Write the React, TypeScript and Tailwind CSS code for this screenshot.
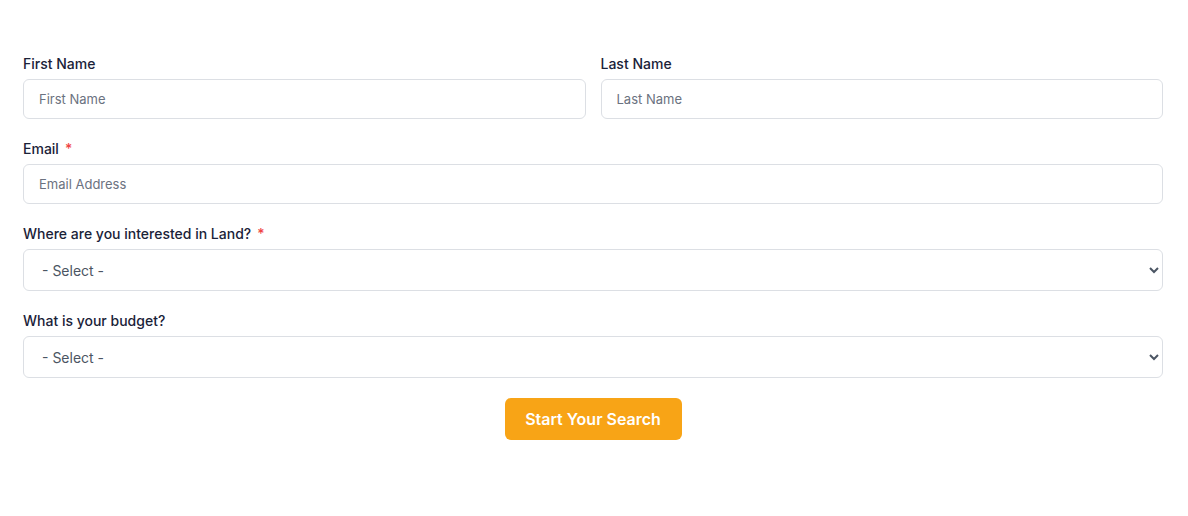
import React from 'react';

const Label: React.FC<{ text: string; required?: boolean }> = ({ text, required }) => (
  <label className="block text-sm leading-5 font-medium text-[#1a2238]">
    {text}
    {required && <span className="ml-1.5 text-[#ef4444]">*</span>}
  </label>
);

const inputCls =
  'mt-[5px] block w-full h-10 rounded-md border border-[#dcdfe4] bg-white px-[15px] text-[13px] text-[#374151] placeholder-[#6b7280] focus:outline-none';

const selectCls =
  'mt-[5px] block w-full h-[42px] rounded-md border border-[#dcdfe4] bg-white pl-[14px] pr-2 text-sm text-[#4b5563] focus:outline-none';

export default function App() {
  return (
    <div className="min-h-screen bg-white font-['Inter',sans-serif]">
      <form className="ml-[23px] w-[1140px] pt-[54px] flex flex-col gap-5" onSubmit={(e) => e.preventDefault()}>
        <div className="grid grid-cols-2 gap-[15px]">
          <div>
            <Label text="First Name" />
            <input className={inputCls} placeholder="First Name" />
          </div>
          <div>
            <Label text="Last Name" />
            <input className={inputCls} placeholder="Last Name" />
          </div>
        </div>
        <div>
          <Label text="Email" required />
          <input className={inputCls} type="email" placeholder="Email Address" />
        </div>
        <div>
          <Label text="Where are you interested in Land?" required />
          <select className={selectCls} defaultValue="">
            <option value="">- Select -</option>
          </select>
        </div>
        <div>
          <Label text="What is your budget?" />
          <select className={selectCls} defaultValue="">
            <option value="">- Select -</option>
          </select>
        </div>
        <div className="flex justify-center">
          <button
            type="submit"
            className="h-[42px] w-[177px] rounded-md bg-[#f8a416] text-base font-semibold text-white"
          >
            Start Your Search
          </button>
        </div>
      </form>
    </div>
  );
}
